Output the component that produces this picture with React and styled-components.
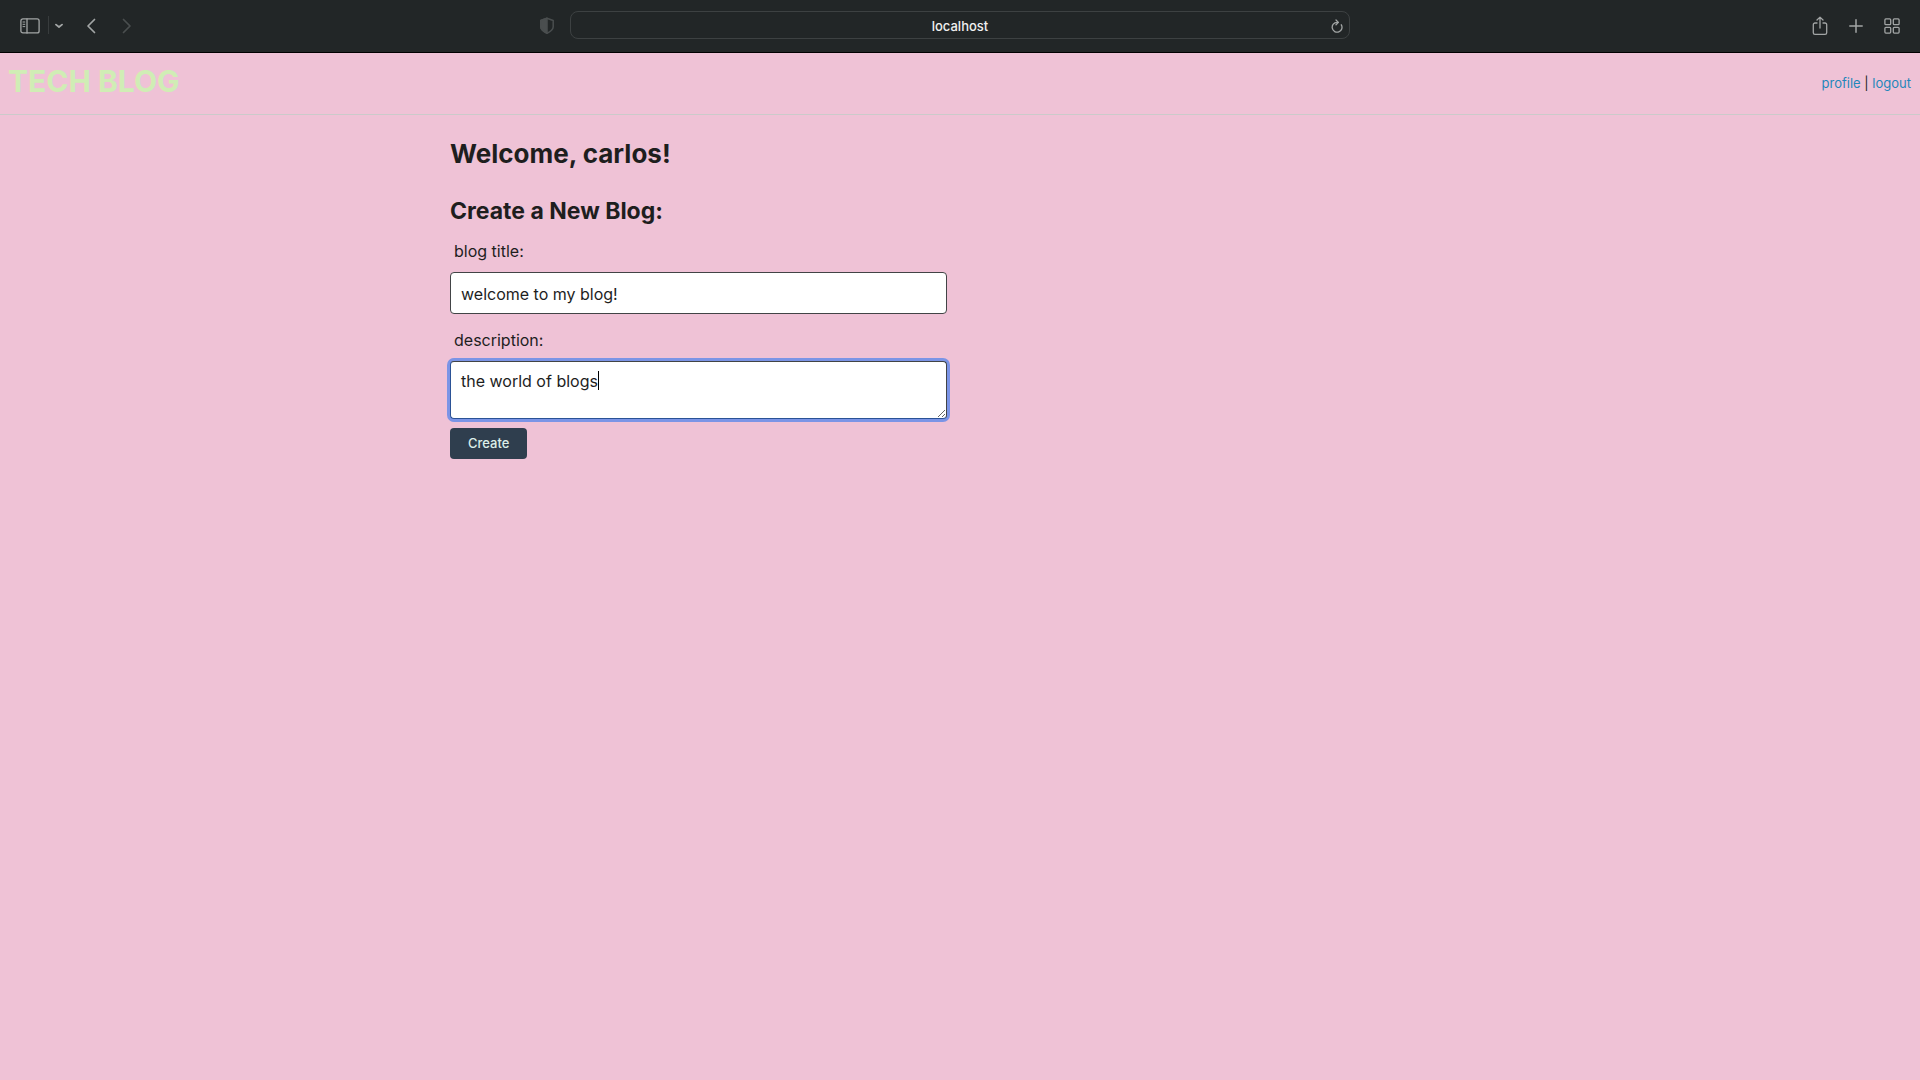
import React from "react";
import styled, { createGlobalStyle } from "styled-components";

const GlobalStyle = createGlobalStyle`
  *, *::before, *::after { box-sizing: border-box; }
  body {
    margin: 0;
    min-height: 100vh;
    background: #efc2d6;
    color: #1e1e1e;
    font-family: Inter, "Liberation Sans", sans-serif;
    font-size: 16px;
    line-height: 24px;
  }
  h1, h2, h3 { margin: 0; font-weight: 700; }
`;

const Toolbar = styled.div`
  display: grid;
  grid-template-columns: 1fr minmax(0, 780px) 1fr;
  align-items: center;
  height: 53px;
  padding: 0 10px 2px;
  background: #222627;
  border-bottom: 1px solid #000;
`;

const ToolGroup = styled.div`
  display: flex;
  align-items: center;
  justify-content: ${(p) => (p.$end ? "flex-end" : "flex-start")};
`;

const LeadingTools = styled.div`
  display: flex;
  justify-content: space-between;
  padding: 0 5px 0 2px;
`;

const ToolButton = styled.button`
  display: flex;
  align-items: center;
  justify-content: center;
  width: ${(p) => p.$width || 36}px;
  height: 32px;
  padding: 2px 0 0;
  border: 0;
  background: none;
  color: ${(p) => (p.$dim ? "#4a4e4f" : "#a2a5a5")};
`;

const Separator = styled.span`
  width: 1px;
  height: 18px;
  background: #383c3d;
`;

const AddressBar = styled.div`
  display: flex;
  align-items: center;
  height: 28px;
  padding-left: 24px;
  border: 1px solid #3d4142;
  border-radius: 8px;
`;

const Address = styled.input`
  flex: 1;
  min-width: 0;
  padding: 2px 0 0;
  border: 0;
  outline: 0;
  background: none;
  color: #f0f0f0;
  font: 500 13px/20px Inter, "Liberation Sans", sans-serif;
  text-align: center;
`;

const Header = styled.header`
  display: flex;
  justify-content: space-between;
  align-items: flex-start;
  padding: 8px 9px 13px 8px;
  border-bottom: 1px solid #cbcaca;
`;

const SiteTitle = styled.h1`
  color: #d0edb5;
  font-size: 30px;
  line-height: 40px;
`;

const Nav = styled.nav`
  padding-top: 10px;
  font-size: 13px;
  line-height: 24px;
`;

const NavLink = styled.a`
  color: #1f87bb;
  text-decoration: none;
`;

const Main = styled.main`
  max-width: 1020px;
  margin: 0 auto;
  padding-top: 17px;
`;

const Welcome = styled.h2`
  margin-bottom: 15px;
  font-size: 26px;
  line-height: 44px;
`;

const Columns = styled.div`
  display: grid;
  grid-template-columns: 1fr 1fr;
  column-gap: 26px;
`;

const FormTitle = styled.h3`
  margin-bottom: 8px;
  font-size: 23px;
  line-height: 40px;
`;

const Field = styled.div`
  margin-bottom: ${(p) => p.$space}px;
`;

const Label = styled.label`
  display: block;
  margin-bottom: 9px;
  padding-left: 4px;
`;

const TextInput = styled.input`
  display: block;
  width: 100%;
  height: 42px;
  padding: 2px 10px 0;
  border: 1px solid #424446;
  border-radius: 4px;
  background: #fff;
  color: #1e1e1e;
  font: inherit;
`;

const EditorFrame = styled.div`
  position: relative;
`;

const TextArea = styled.textarea`
  display: block;
  width: 100%;
  height: 58px;
  padding: 7px 10px;
  border: 1px solid #424446;
  border-radius: 4px;
  outline: 0;
  background: #fff;
  color: #1e1e1e;
  font: inherit;
  caret-color: transparent;
  resize: vertical;
  &:focus {
    border-bottom-color: #2b5296;
    border-left-color: #2b5296;
    box-shadow: 0 0 0 3px #7b94e6;
  }
`;

const Caret = styled.span`
  position: absolute;
  top: 10px;
  left: 148px;
  width: 1px;
  height: 19px;
  background: #000;
`;

const SubmitButton = styled.button`
  height: 31px;
  padding: 0 18px 1px;
  border: 0;
  border-radius: 4px;
  background: #2f3e4e;
  color: #dcefe9;
  font: 500 13px/20px Inter, "Liberation Sans", sans-serif;
`;

const Icon = ({ width, height, stroke = 1.3, children }) => (
  <svg
    width={width}
    height={height}
    viewBox={`0 0 ${width} ${height}`}
    fill="none"
    stroke="currentColor"
    strokeWidth={stroke}
    strokeLinecap="round"
    strokeLinejoin="round"
    aria-hidden="true"
  >
    {children}
  </svg>
);

function BrowserToolbar() {
  return (
    <Toolbar>
      <LeadingTools>
        <ToolGroup>
          <ToolButton aria-label="Sidebar">
            <Icon width={20} height={16}>
              <rect x="0.9" y="0.9" width="18.2" height="14" rx="2" />
              <path d="M7 1v14" />
              <path d="M3 4h1.8M3 6.3h1.8M3 8.6h1.8" strokeWidth="1" />
            </Icon>
          </ToolButton>
          <Separator />
          <ToolButton $width={20} aria-label="Tab groups">
            <Icon width={8} height={6} stroke={1.8}>
              <path d="M1 1.6l3 2.4 3-2.4" />
            </Icon>
          </ToolButton>
          <ToolButton $width={44} aria-label="Back">
            <Icon width={10} height={16} stroke={1.7}>
              <path d="M8.5 1.5L2 8l6.5 6.5" />
            </Icon>
          </ToolButton>
          <ToolButton $width={28} $dim aria-label="Forward">
            <Icon width={10} height={16} stroke={1.7}>
              <path d="M1.5 1.5L8 8l-6.5 6.5" />
            </Icon>
          </ToolButton>
        </ToolGroup>
        <ToolButton $dim aria-label="Privacy report">
          <Icon width={16} height={18} stroke={1.5}>
            <path d="M8 1.3L14.2 3.5v6.2c0 3-2.5 4.8-6.2 6.6-3.7-1.8-6.2-3.6-6.2-6.6V3.5z" />
            <path d="M8 1.3v15c-3.7-1.8-6.2-3.6-6.2-6.6V3.5z" fill="currentColor" />
          </Icon>
        </ToolButton>
      </LeadingTools>
      <AddressBar>
        <Address aria-label="Address" defaultValue="localhost" />
        <ToolButton $width={24} aria-label="Reload">
          <Icon width={12} height={14}>
            <path d="M10.3 5.8A4.9 4.9 0 1 1 6 3.4h1" />
            <path d="M5 1l2.4 2.4L5 5.8" />
          </Icon>
        </ToolButton>
      </AddressBar>
      <ToolGroup $end>
        <ToolButton aria-label="Share">
          <Icon width={16} height={20}>
            <path d="M5 7H3a1.7 1.7 0 0 0-1.7 1.7v8A1.7 1.7 0 0 0 3 18.4h10a1.7 1.7 0 0 0 1.7-1.7v-8A1.7 1.7 0 0 0 13 7h-2" />
            <path d="M8 12V1.2M5 4l3-2.9L11 4" />
          </Icon>
        </ToolButton>
        <ToolButton aria-label="New tab">
          <Icon width={14} height={14} stroke={1.5}>
            <path d="M7 .8v12.4M.8 7h12.4" />
          </Icon>
        </ToolButton>
        <ToolButton aria-label="Tab overview">
          <Icon width={16} height={16}>
            <rect x=".9" y=".9" width="5.8" height="5.8" rx="1" />
            <rect x="9.3" y=".9" width="5.8" height="5.8" rx="1" />
            <rect x=".9" y="9.3" width="5.8" height="5.8" rx="1" />
            <rect x="9.3" y="9.3" width="5.8" height="5.8" rx="1" />
          </Icon>
        </ToolButton>
      </ToolGroup>
    </Toolbar>
  );
}

export default function App() {
  return (
    <>
      <GlobalStyle />
      <BrowserToolbar />
      <Header>
        <SiteTitle>TECH BLOG</SiteTitle>
        <Nav>
          <NavLink href="#profile">profile</NavLink> | <NavLink href="#logout">logout</NavLink>
        </Nav>
      </Header>
      <Main>
        <Welcome>Welcome, carlos!</Welcome>
        <Columns>
          <form onSubmit={(e) => e.preventDefault()}>
            <FormTitle>Create a New Blog:</FormTitle>
            <Field $space={14}>
              <Label htmlFor="blog-title">blog title:</Label>
              <TextInput id="blog-title" defaultValue="welcome to my blog!" />
            </Field>
            <Field $space={9}>
              <Label htmlFor="blog-desc">description:</Label>
              <EditorFrame>
                <TextArea id="blog-desc" autoFocus defaultValue="the world of blogs" />
                <Caret />
              </EditorFrame>
            </Field>
            <SubmitButton type="submit">Create</SubmitButton>
          </form>
        </Columns>
      </Main>
    </>
  );
}
